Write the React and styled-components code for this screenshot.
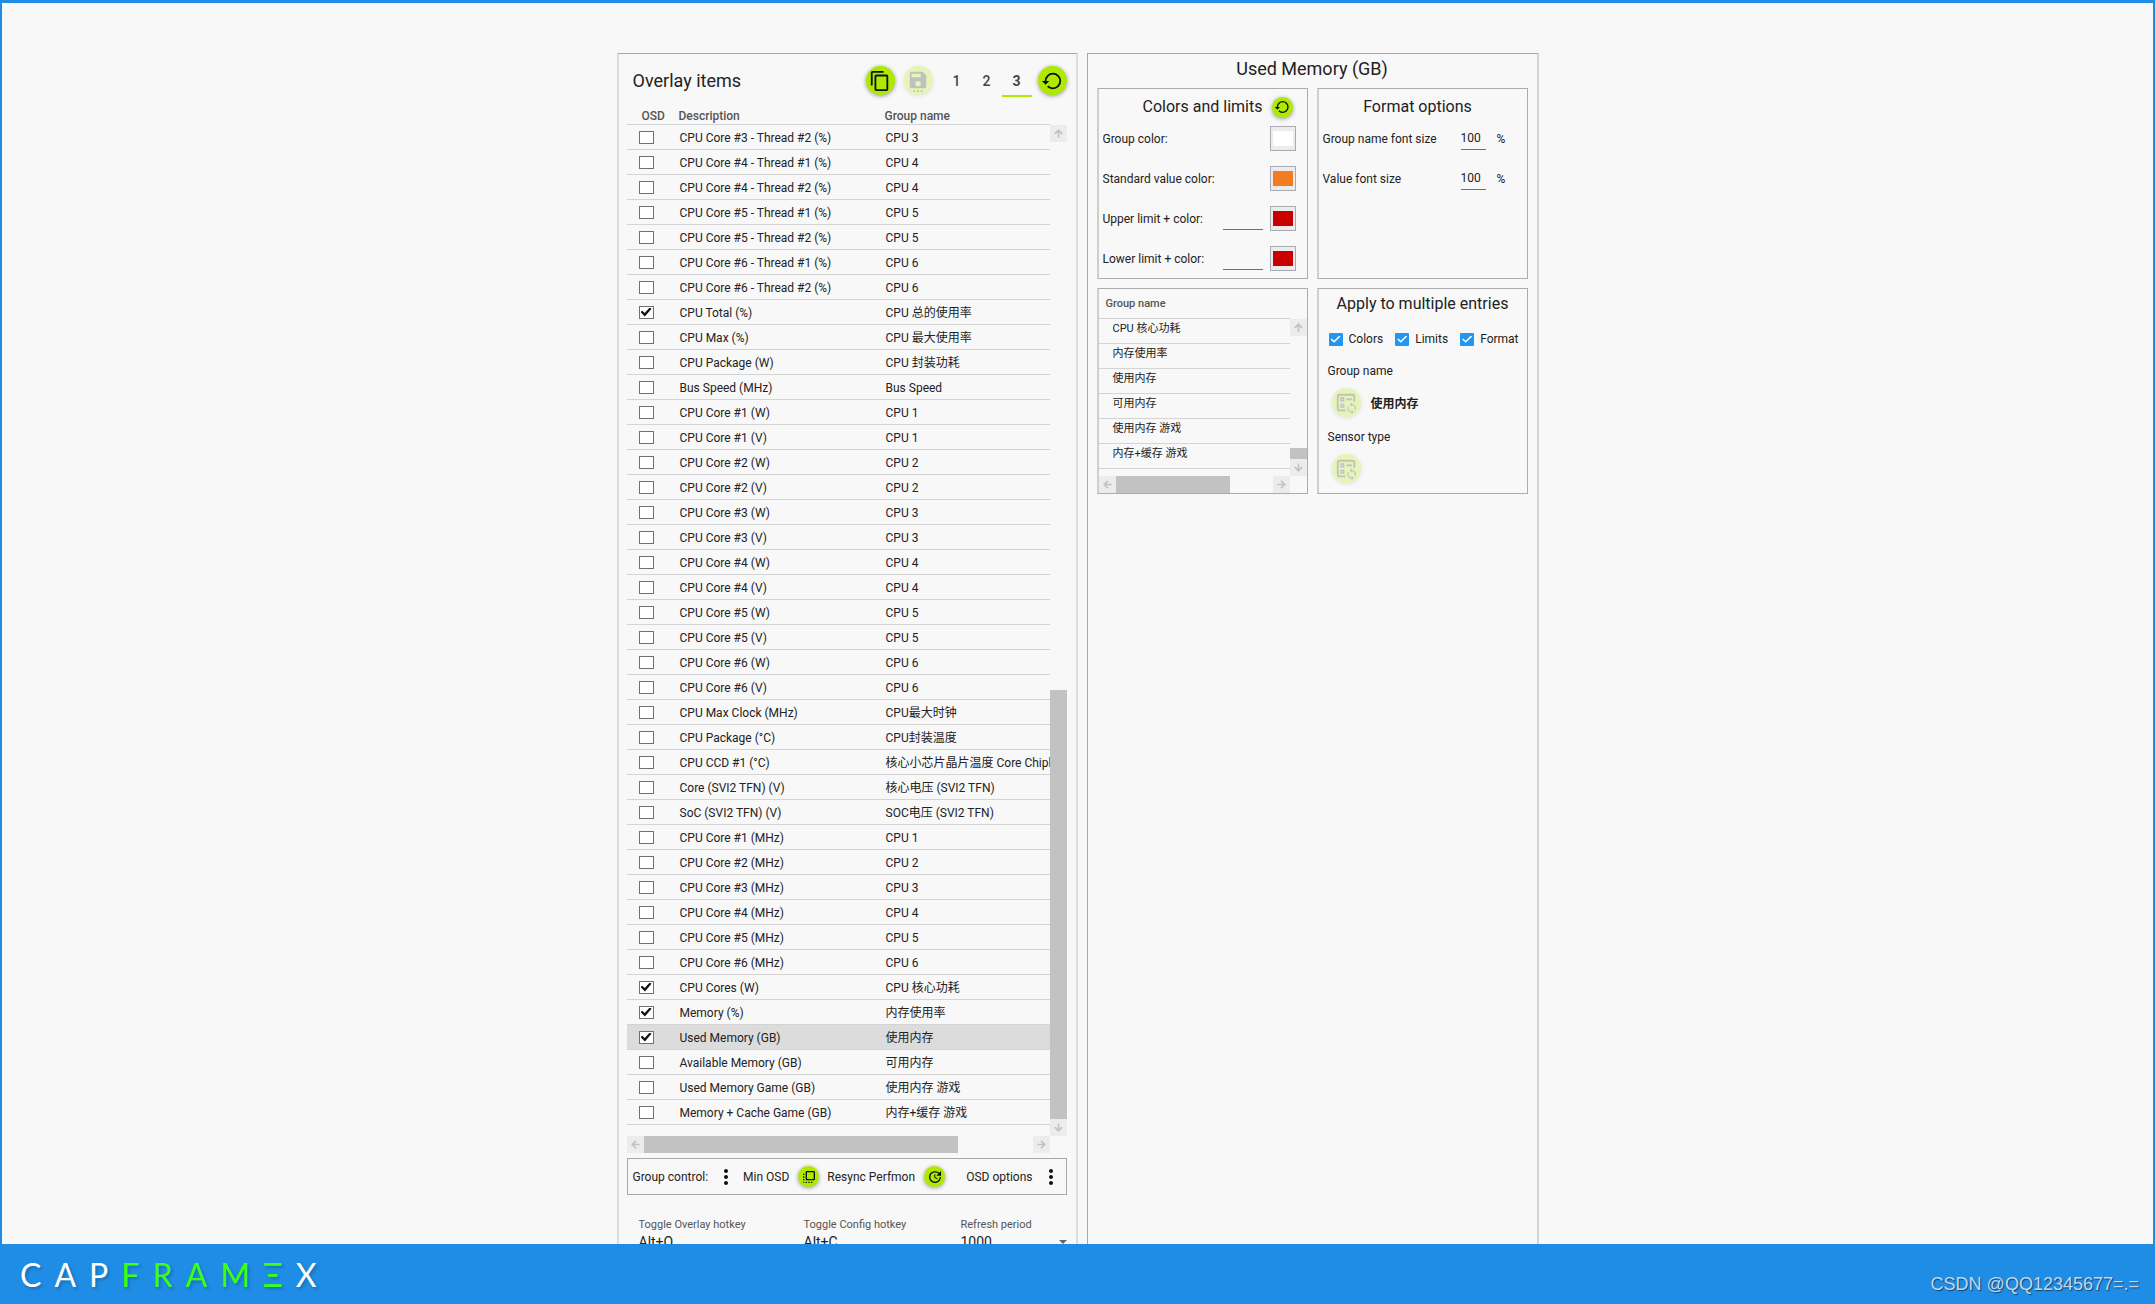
import React, { useState } from "react";
import styled, { createGlobalStyle, css } from "styled-components";
import { MdContentCopy, MdFlipToFront, MdMoreVert, MdUpdate } from "react-icons/md";

const overlayItems = [
  ["CPU Core #3 - Thread #2 (%)", "CPU 3"],
  ["CPU Core #4 - Thread #1 (%)", "CPU 4"],
  ["CPU Core #4 - Thread #2 (%)", "CPU 4"],
  ["CPU Core #5 - Thread #1 (%)", "CPU 5"],
  ["CPU Core #5 - Thread #2 (%)", "CPU 5"],
  ["CPU Core #6 - Thread #1 (%)", "CPU 6"],
  ["CPU Core #6 - Thread #2 (%)", "CPU 6"],
  ["CPU Total (%)", "CPU 总的使用率", true],
  ["CPU Max (%)", "CPU 最大使用率"],
  ["CPU Package (W)", "CPU 封装功耗"],
  ["Bus Speed (MHz)", "Bus Speed"],
  ["CPU Core #1 (W)", "CPU 1"],
  ["CPU Core #1 (V)", "CPU 1"],
  ["CPU Core #2 (W)", "CPU 2"],
  ["CPU Core #2 (V)", "CPU 2"],
  ["CPU Core #3 (W)", "CPU 3"],
  ["CPU Core #3 (V)", "CPU 3"],
  ["CPU Core #4 (W)", "CPU 4"],
  ["CPU Core #4 (V)", "CPU 4"],
  ["CPU Core #5 (W)", "CPU 5"],
  ["CPU Core #5 (V)", "CPU 5"],
  ["CPU Core #6 (W)", "CPU 6"],
  ["CPU Core #6 (V)", "CPU 6"],
  ["CPU Max Clock (MHz)", "CPU最大时钟"],
  ["CPU Package (°C)", "CPU封装温度"],
  ["CPU CCD #1 (°C)", "核心小芯片晶片温度 Core Chiplet"],
  ["Core (SVI2 TFN) (V)", "核心电压 (SVI2 TFN)"],
  ["SoC (SVI2 TFN) (V)", "SOC电压 (SVI2 TFN)"],
  ["CPU Core #1 (MHz)", "CPU 1"],
  ["CPU Core #2 (MHz)", "CPU 2"],
  ["CPU Core #3 (MHz)", "CPU 3"],
  ["CPU Core #4 (MHz)", "CPU 4"],
  ["CPU Core #5 (MHz)", "CPU 5"],
  ["CPU Core #6 (MHz)", "CPU 6"],
  ["CPU Cores (W)", "CPU 核心功耗", true],
  ["Memory (%)", "内存使用率", true],
  ["Used Memory (GB)", "使用内存", true],
  ["Available Memory (GB)", "可用内存"],
  ["Used Memory Game (GB)", "使用内存 游戏"],
  ["Memory + Cache Game (GB)", "内存+缓存 游戏"],
];

const groupNames = ["CPU 核心功耗", "内存使用率", "使用内存", "可用内存", "使用内存 游戏", "内存+缓存 游戏"];

const colorRows = [
  { id: "group", label: "Group color:", color: "#ffffff" },
  { id: "standard", label: "Standard value color:", color: "#f27d20" },
  { id: "upper", label: "Upper limit + color:", color: "#c80000", limit: true },
  { id: "lower", label: "Lower limit + color:", color: "#c80000", limit: true },
];

const RestoreIcon = ({ size }) => (
  <svg width={size} height={size} viewBox="0 0 24 24" fill="currentColor">
    <path d="M13,3A9,9 0 0,0 4,12H1L4.89,15.89L4.96,16.03L9,12H6A7,7 0 0,1 13,5A7,7 0 0,1 20,12A7,7 0 0,1 13,19C11.07,19 9.32,18.21 8.06,16.94L6.64,18.36C8.27,20 10.5,21 13,21A9,9 0 0,0 22,12A9,9 0 0,0 13,3Z" />
  </svg>
);

const SaveIcon = () => (
  <svg width="22" height="22" viewBox="0 0 24 24" fill="currentColor">
    <path d="M15,8V4H5V8H15M12,18A3,3 0 0,0 15,15A3,3 0 0,0 12,12A3,3 0 0,0 9,15A3,3 0 0,0 12,18M17,2L21,6V18A2,2 0 0,1 19,20H5C3.89,20 3,19.1 3,18V4A2,2 0 0,1 5,2H17M11,22H13V24H11V22M7,22H9V24H7V22M15,22H17V24H15V22Z" />
  </svg>
);

const ListSyncIcon = () => (
  <svg width="22" height="22" viewBox="0 0 24 24" fill="none" stroke="currentColor" strokeWidth="2">
    <path d="M11.500 20H4.500A1.500 1.500 0 0 1 3 18.500V4.500A1.500 1.500 0 0 1 4.500 3H19.500A1.500 1.500 0 0 1 21 4.500V10.500" />
    <path d="M6.500 6.500h3v3h-3zM6.500 13.500h3v3h-3z" strokeWidth="1.500" />
    <path d="M12.500 8H18.500" />
    <path
      d="M12 4V1L8 5l4 4V6c3.31 0 6 2.69 6 6 0 1.01-.25 1.97-.7 2.8l1.46 1.46C19.54 15.03 20 13.57 20 12c0-4.42-3.58-8-8-8zm0 14c-3.31 0-6-2.69-6-6 0-1.01.25-1.97.7-2.8L5.24 7.74C4.46 8.97 4 10.43 4 12c0 4.42 3.58 8 8 8v3l4-4-4-4v3z"
      transform="translate(11.200 10.800) scale(0.580)"
      fill="currentColor"
      stroke="none"
    />
  </svg>
);

const arrowTurn = { up: 0, right: 90, down: 180, left: 270 };

const Arrow = ({ to }) => (
  <ArrowButton type="button" aria-label={`Scroll ${to}`}>
    <svg width="11" height="11" viewBox="0 0 12 12" fill="none" stroke="currentColor" strokeWidth="1.8">
      <path d="M6 10.500V2.500M2 6.500L6 2.500L10 6.500" transform={`rotate(${arrowTurn[to]} 6 6)`} />
    </svg>
  </ArrowButton>
);

// before / size / after are the shares of the track round the thumb
const ScrollBar = ({ vertical, before = 0, size, after = 0, headHeight }) => (
  <Bar $vertical={vertical} $headHeight={headHeight}>
    <Arrow to={vertical ? "up" : "left"} />
    <Track $share={before} />
    <Thumb $share={size} />
    <Track $share={after} />
    <Arrow to={vertical ? "down" : "right"} />
  </Bar>
);

const App = () => {
  const [checked, setChecked] = useState(overlayItems.map((item) => Boolean(item[2])));
  const [selected, setSelected] = useState(36);
  const [slot, setSlot] = useState(3);

  const toggle = (index) => {
    setChecked(checked.map((value, i) => (i === index ? !value : value)));
  };

  return (
    <Window>
      <GlobalStyle />
      <Main>
        <Panels>
          <ItemsPanel>
            <PanelHeader>
              <PanelTitle>Overlay items</PanelTitle>
              <HeaderActions>
                <RoundButton type="button" aria-label="Copy">
                  <MdContentCopy size={22} />
                </RoundButton>
                <RoundButton type="button" aria-label="Save" disabled>
                  <SaveIcon />
                </RoundButton>
                <Slots>
                  {[1, 2, 3].map((n) => (
                    <Slot key={n} type="button" $active={slot === n} onClick={() => setSlot(n)}>
                      {n}
                    </Slot>
                  ))}
                </Slots>
              </HeaderActions>
              <RoundButton type="button" aria-label="Reset">
                <RestoreIcon size={22} />
              </RoundButton>
            </PanelHeader>

            <ScrollPane>
              <ItemTable>
                <colgroup>
                  <CheckCol />
                  <DescriptionCol />
                  <col />
                </colgroup>
                <thead>
                  <tr>
                    <th>OSD</th>
                    <th>Description</th>
                    <th>Group name</th>
                  </tr>
                </thead>
                <tbody>
                  {overlayItems.map(([description, group], index) => (
                    <ItemRow key={index} $selected={selected === index} onClick={() => setSelected(index)}>
                      <td>
                        <OsdCheck
                          type="checkbox"
                          aria-label={description}
                          checked={checked[index]}
                          onChange={() => toggle(index)}
                        />
                      </td>
                      <td>{description}</td>
                      <td>{group}</td>
                    </ItemRow>
                  ))}
                </tbody>
              </ItemTable>
              <ScrollBar vertical before={548} size={429} headHeight={18} />
              <ScrollBar size={314} after={75} />
            </ScrollPane>

            <ControlBar>
              <ControlGroup>
                Group control:
                <MenuButton type="button" aria-label="Group control menu">
                  <MdMoreVert size={24} />
                </MenuButton>
              </ControlGroup>
              <ControlGroup>
                Min OSD
                <RoundButton type="button" $small aria-label="Min OSD">
                  <MdFlipToFront size={16} />
                </RoundButton>
              </ControlGroup>
              <ControlGroup>
                Resync Perfmon
                <RoundButton type="button" $small aria-label="Resync Perfmon">
                  <MdUpdate size={16} />
                </RoundButton>
              </ControlGroup>
              <ControlGroup $end>
                OSD options
                <MenuButton type="button" aria-label="OSD options menu">
                  <MdMoreVert size={24} />
                </MenuButton>
              </ControlGroup>
            </ControlBar>

            <Fields>
              <Field>
                <label htmlFor="overlay-hotkey">Toggle Overlay hotkey</label>
                <HotkeyInput id="overlay-hotkey" defaultValue="Alt+O" />
              </Field>
              <Field>
                <label htmlFor="config-hotkey">Toggle Config hotkey</label>
                <HotkeyInput id="config-hotkey" defaultValue="Alt+C" />
              </Field>
              <Field>
                <label htmlFor="refresh">Refresh period</label>
                <PeriodBox>
                  <PeriodSelect id="refresh" defaultValue="1000">
                    <option>500</option>
                    <option>1000</option>
                  </PeriodSelect>
                  <Caret />
                </PeriodBox>
              </Field>
            </Fields>
          </ItemsPanel>

          <DetailPanel>
            <DetailTitle>Used Memory (GB)</DetailTitle>
            <Cards>
              <Card>
                <ColorsHeader>
                  <CardTitle>Colors and limits</CardTitle>
                  <RoundButton type="button" $small aria-label="Reset colors">
                    <RestoreIcon size={16} />
                  </RoundButton>
                </ColorsHeader>
                <OptionRows>
                  {colorRows.map((row) => (
                    <ColorRow key={row.id}>
                      <label htmlFor={row.id}>{row.label}</label>
                      {row.limit && <LineInput $width={40} aria-label={`${row.label} value`} />}
                      <Swatch id={row.id} type="color" defaultValue={row.color} />
                    </ColorRow>
                  ))}
                </OptionRows>
              </Card>

              <Card>
                <FormatHeader>
                  <CardTitle>Format options</CardTitle>
                </FormatHeader>
                <OptionRows>
                  <FormatRow>
                    <label htmlFor="group-size">Group name font size</label>
                    <LineInput id="group-size" $width={25} defaultValue="100" />
                    <span>%</span>
                  </FormatRow>
                  <FormatRow>
                    <label htmlFor="value-size">Value font size</label>
                    <LineInput id="value-size" $width={25} defaultValue="100" />
                    <span>%</span>
                  </FormatRow>
                </OptionRows>
              </Card>

              <Card>
                <ScrollPane>
                  <GroupTable>
                    <thead>
                      <tr>
                        <th>Group name</th>
                      </tr>
                    </thead>
                    <tbody>
                      {groupNames.map((name) => (
                        <tr key={name}>
                          <td>{name}</td>
                        </tr>
                      ))}
                    </tbody>
                  </GroupTable>
                  <ScrollBar vertical before={112} size={11} headHeight={30} />
                  <ScrollBar size={115} after={43} />
                </ScrollPane>
              </Card>

              <Card>
                <ApplyHeader>
                  <CardTitle>Apply to multiple entries</CardTitle>
                </ApplyHeader>
                <ApplyBody>
                  <Checks>
                    {["Colors", "Limits", "Format"].map((name) => (
                      <CheckLabel key={name}>
                        <BlueCheck type="checkbox" defaultChecked />
                        {name}
                      </CheckLabel>
                    ))}
                  </Checks>
                  <ApplyLabel>Group name</ApplyLabel>
                  <ApplyRow>
                    <RoundButton type="button" aria-label="Apply to group" disabled>
                      <ListSyncIcon />
                    </RoundButton>
                    <strong>使用内存</strong>
                  </ApplyRow>
                  <ApplyLabel>Sensor type</ApplyLabel>
                  <ApplyRow>
                    <RoundButton type="button" aria-label="Apply to sensor type" disabled>
                      <ListSyncIcon />
                    </RoundButton>
                  </ApplyRow>
                </ApplyBody>
              </Card>
            </Cards>
          </DetailPanel>
        </Panels>
      </Main>

      <Footer>
        <Logo aria-label="CapFrameX">
          {[..."CAPFRAMΞX"].map((letter, index) => (
            <LogoLetter key={index} $green={index > 2 && index < 8}>
              {letter}
            </LogoLetter>
          ))}
        </Logo>
        <Credit>CSDN @QQ12345677=.=</Credit>
      </Footer>
    </Window>
  );
};

// Styled components
const GlobalStyle = createGlobalStyle`
  * {
    box-sizing: border-box;
  }

  body {
    margin: 0;
    font-family: Roboto, "Noto Sans CJK SC", sans-serif;
    font-size: 12px;
    color: #222;
  }

  button, input, select {
    font: inherit;
    color: inherit;
  }

  h1, h2, h3 {
    margin: 0;
    font-weight: 400;
  }
`;

const Window = styled.div`
  display: flex;
  flex-direction: column;
  height: 100vh;
  background: #f8f8f8;
`;

const Main = styled.main`
  flex: 1;
  min-height: 0;
  display: flex;
  justify-content: center;
  padding-top: 50px;
  border: 2px solid #1f8ce5;
  border-top-width: 3px;
  border-bottom: none;
  overflow: hidden;
`;

const Panels = styled.div`
  display: grid;
  grid-template-columns: 461fr 452fr;
  gap: 9px;
  width: 100%;
  max-width: 922px;
  min-height: 100%;
`;

const ItemsPanel = styled.section`
  padding: 0 9px 0 8px;
  border: 2px solid #dcdcdc;
  border-top: 1px solid #a8a8a8;
`;

const DetailPanel = styled.section`
  padding: 0 9px;
  border: 1px solid #a8a8a8;
  border-right: 2px solid #d4d4d4;
`;

const PanelHeader = styled.header`
  display: flex;
  align-items: center;
  gap: 6px;
  height: 53px;
  padding-left: 6px;
`;

const PanelTitle = styled.h1`
  flex: 1;
  font-size: 18px;
`;

const HeaderActions = styled.div`
  display: flex;
  align-items: center;
  gap: 9px;
`;

const RoundButton = styled.button`
  display: flex;
  align-items: center;
  justify-content: center;
  flex-shrink: 0;
  width: ${({ $small }) => ($small ? 21 : 29)}px;
  height: ${({ $small }) => ($small ? 21 : 29)}px;
  padding: 0;
  border: none;
  border-radius: 50%;
  background: #aeea00;
  color: #111;
  box-shadow: 0 1px 4px rgba(0, 0, 0, 0.4);

  &:disabled {
    background: #e6f4b8;
    color: #c0c0c0;
    box-shadow: 0 1px 4px rgba(0, 0, 0, 0.1);
  }
`;

const Slots = styled.div`
  display: flex;
`;

const Slot = styled.button`
  width: 30px;
  height: 32px;
  padding: 0;
  border: none;
  border-top: 2px solid transparent;
  border-bottom: 2px solid ${({ $active }) => ($active ? "#aeea00" : "transparent")};
  background: none;
  color: #444;
  font-size: 14px;
  font-weight: ${({ $active }) => ($active ? 700 : 500)};
`;

const ScrollPane = styled.div`
  display: grid;
  grid-template-columns: minmax(0, 1fr) 17px;
`;

const Bar = styled.div`
  display: flex;
  ${({ $vertical, $headHeight }) =>
    $vertical
      ? css`
          flex-direction: column;
          width: 17px;
          margin-top: ${$headHeight}px;
        `
      : css`
          height: 17px;
        `}
`;

const ArrowButton = styled.button`
  display: flex;
  align-items: center;
  justify-content: center;
  flex: 0 0 17px;
  min-width: 17px;
  min-height: 17px;
  padding: 0;
  border: none;
  background: #ececec;
  color: #c2c2c2;
`;

const Track = styled.span`
  flex: ${({ $share }) => $share} 0 0;
`;

const Thumb = styled(Track)`
  background: #c2c2c2;
`;

const CheckCol = styled.col`
  width: 52px;
`;

const DescriptionCol = styled.col`
  width: 206px;
`;

const ItemTable = styled.table`
  width: 100%;
  margin-bottom: 11px;
  table-layout: fixed;
  border-collapse: separate;
  border-spacing: 0;
  line-height: 16px;

  th {
    height: 18px;
    padding: 0;
    border-bottom: 1px solid #d4d4d4;
    color: #555;
    font-weight: 500;
    text-align: left;
  }

  th:first-child {
    padding-left: 15px;
  }

  td {
    height: 25px;
    padding: 2px 0 0 1px;
    border-bottom: 1px solid #d4d4d4;
    overflow: hidden;
    white-space: nowrap;
  }

  td:first-child {
    padding: 0 0 0 12px;
  }
`;

const ItemRow = styled.tr`
  background: ${({ $selected }) => ($selected ? "#dcdcdc" : "transparent")};
`;

const OsdCheck = styled.input`
  appearance: none;
  display: block;
  width: 15px;
  height: 13px;
  margin: 0;
  border: 1px solid #707070;
  background: #fff;

  &:checked::before {
    content: "";
    display: block;
    width: 11px;
    height: 9px;
    margin: 1px;
    background: #111;
    clip-path: polygon(0 50%, 16% 36%, 38% 62%, 84% 0, 100% 14%, 40% 100%);
  }
`;

const ControlBar = styled.div`
  display: flex;
  align-items: center;
  gap: 8px;
  height: 37px;
  margin-top: 5px;
  padding: 0 6px 0 5px;
  border: 1px solid #a8a8a8;
`;

const ControlGroup = styled.div`
  display: flex;
  align-items: center;
  gap: 9px;
  margin-left: ${({ $end }) => ($end ? "auto" : 0)};
  white-space: nowrap;
`;

const MenuButton = styled.button`
  display: flex;
  justify-content: center;
  width: 18px;
  padding: 0;
  border: none;
  background: none;
  color: #111;

  svg {
    flex-shrink: 0;
  }
`;

const Fields = styled.div`
  display: grid;
  grid-template-columns: 165fr 157fr 106fr;
  margin-top: 23px;
  padding-left: 12px;
`;

const Field = styled.div`
  display: flex;
  flex-direction: column;
  gap: 1px;
  min-width: 0;

  label {
    color: #555;
    font-size: 11px;
    line-height: 14px;
  }
`;

const HotkeyInput = styled.input`
  width: 120px;
  height: 26px;
  padding: 0 0 8px;
  border: none;
  border-bottom: 1px solid #888;
  background: none;
  font-size: 14px;
`;

const PeriodBox = styled.div`
  display: flex;
  align-items: center;
  border-bottom: 1px solid #888;
`;

const PeriodSelect = styled.select`
  appearance: none;
  flex: 1;
  height: 18px;
  padding: 0;
  border: none;
  background: none;
  font-size: 14px;
`;

const Caret = styled.span`
  border: 4px solid transparent;
  border-top-color: #666;
  border-bottom: none;
`;

const DetailTitle = styled.h2`
  padding-bottom: 4px;
  font-size: 18px;
  line-height: 30px;
  text-align: center;
`;

const Cards = styled.div`
  display: grid;
  grid-template-columns: 1fr 1fr;
  gap: 9px;
`;

const Card = styled.section`
  min-width: 0;
  border: 1px solid #acacac;
  border-left: 2px solid #cfcfcf;
`;

const CardTitle = styled.h3`
  font-size: 16px;
  line-height: 20px;
`;

const CardHeader = styled.header`
  display: flex;
  align-items: center;
  height: 36px;
`;

const ColorsHeader = styled(CardHeader)`
  justify-content: flex-end;
  gap: 9px;
  padding-right: 14px;
`;

const FormatHeader = styled(CardHeader)`
  justify-content: center;
  padding-right: 10px;
`;

const ApplyHeader = styled(CardHeader)`
  justify-content: center;
  height: 30px;
`;

const OptionRows = styled.div`
  display: flex;
  flex-direction: column;
  gap: 14px;
  padding: 0 11px 7px 4px;

  label,
  span {
    padding-top: 2px;
  }
`;

const ColorRow = styled.div`
  display: flex;
  align-items: center;
  gap: 7px;
  height: 26px;

  label {
    flex: 1;
  }
`;

const FormatRow = styled.div`
  display: grid;
  grid-template-columns: 138px 25px auto;
  align-items: center;
  height: 26px;

  span {
    padding-left: 11px;
  }
`;

const LineInput = styled.input`
  width: ${({ $width }) => $width}px;
  height: 24px;
  padding: 0;
  border: none;
  border-bottom: 1px solid #707070;
  background: none;
`;

const Swatch = styled.input`
  appearance: none;
  width: 26px;
  height: 25px;
  padding: 4px 2px;
  border: 1px solid #aaaab0;
  background: #ececee;

  &::-webkit-color-swatch-wrapper {
    padding: 0;
  }

  &::-webkit-color-swatch {
    border: none;
  }
`;

const GroupTable = styled.table`
  margin-bottom: 7px;
  border-collapse: separate;
  border-spacing: 0;
  font-size: 11px;

  th {
    height: 30px;
    padding: 0 0 0 7px;
    border-bottom: 1px solid #d4d4d4;
    color: #555;
    font-weight: 500;
    text-align: left;
  }

  td {
    height: 25px;
    padding: 0 0 0 14px;
    border-bottom: 1px solid #d4d4d4;
    line-height: 19px;
    vertical-align: top;
  }
`;

const ApplyBody = styled.div`
  padding: 8px 9px;
`;

const Checks = styled.div`
  display: flex;
  align-items: center;
  gap: 12px;
  height: 24px;
  padding-left: 1px;
`;

const CheckLabel = styled.label`
  display: flex;
  align-items: center;
  gap: 6px;
`;

const BlueCheck = styled.input`
  appearance: none;
  width: 14px;
  height: 13px;
  margin: 0;
  border-radius: 1px;
  background: #2196f3;

  &:checked::before {
    content: "";
    display: block;
    width: 10px;
    height: 8px;
    margin: 3px 2px;
    background: #fff;
    clip-path: polygon(0 50%, 12% 37%, 36% 66%, 88% 0, 100% 14%, 36% 92%);
  }
`;

const ApplyLabel = styled.div`
  margin: 10px 0 7px;
  line-height: 20px;
`;

const ApplyRow = styled.div`
  display: flex;
  align-items: center;
  gap: 10px;
  padding-left: 4px;
`;

const Footer = styled.footer`
  display: flex;
  justify-content: space-between;
  height: 60px;
  padding: 0 16px 0 20px;
  background: #1f8ce5;
`;

const Logo = styled.div`
  display: flex;
  align-items: center;
  gap: 13px;
  font-family: Lato, sans-serif;
  font-size: 32px;
`;

const LogoLetter = styled.span`
  color: ${({ $green }) => ($green ? "#3dff14" : "#fff")};
  text-shadow: 2px 2px 3px rgba(0, 0, 0, 0.2);
`;

const Credit = styled.span`
  padding-top: 29px;
  color: #c3d7e8;
  font-family: "Liberation Sans", sans-serif;
  font-size: 18px;
  line-height: 22px;
  text-shadow: 1px 1px 1px rgba(0, 0, 0, 0.5);
`;

export default App;
